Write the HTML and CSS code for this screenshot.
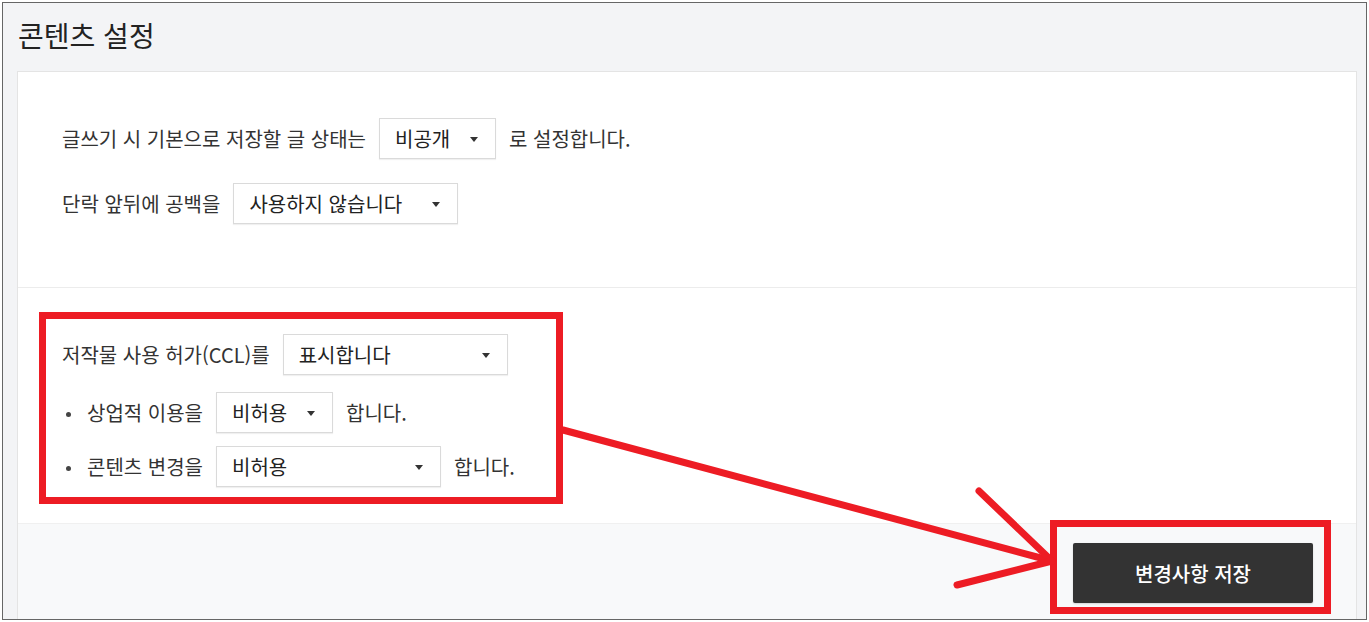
FILE: index.html
```html
<!DOCTYPE html>
<html lang="ko">
<head>
  <meta charset="UTF-8" />
  <meta name="viewport" content="width=device-width, initial-scale=1.0"/>
  <title>콘텐츠 설정</title>
  <link rel="stylesheet" href="styles.css">
</head>
<body>
  <div class="frame">
    <h2 class="page-title">콘텐츠 설정</h2>

    <div class="settings-card">
      <div class="settings-section">
        <div class="setting-row">
          <span>글쓰기 시 기본으로 저장할 글 상태는</span>
          <div class="select-box w-small">비공개<span class="caret"></span></div>
          <span>로 설정합니다.</span>
        </div>
        <div class="setting-row">
          <span>단락 앞뒤에 공백을</span>
          <div class="select-box w-large">사용하지 않습니다<span class="caret"></span></div>
        </div>
      </div>

      <div class="settings-section ccl">
        <div class="setting-row">
          <span>저작물 사용 허가(CCL)를</span>
          <div class="select-box w-large">표시합니다<span class="caret"></span></div>
        </div>
        <div class="setting-row sub">
          <span class="bullet">상업적 이용을</span>
          <div class="select-box w-small">비허용<span class="caret"></span></div>
          <span>합니다.</span>
        </div>
        <div class="setting-row sub">
          <span class="bullet">콘텐츠 변경을</span>
          <div class="select-box w-large">비허용<span class="caret"></span></div>
          <span>합니다.</span>
        </div>
      </div>

      <div class="settings-footer">
        <button class="save-btn">변경사항 저장</button>
      </div>
    </div>

    <!-- annotation marks drawn over the page -->
    <svg class="markup" width="1369" height="622" viewBox="0 0 1369 622">
      <rect x="42.5" y="315.5" width="517" height="185" fill="none" stroke="#ed1c24" stroke-width="7"/>
      <rect x="1053.5" y="523.5" width="274" height="87" fill="none" stroke="#ed1c24" stroke-width="7"/>
      <g stroke="#ed1c24" stroke-width="7" stroke-linecap="round" fill="none">
        <line x1="563" y1="430" x2="1052" y2="561"/>
        <line x1="979" y1="491" x2="1052" y2="561"/>
        <line x1="957" y1="585" x2="1052" y2="561"/>
      </g>
    </svg>
  </div>
</body>
</html>
```

FILE: styles.css
```css
body {
  margin: 0;
  font-family: "Noto Sans CJK KR", "Noto Sans", sans-serif;
  color: #333;
  background: #fff;
}

.frame {
  position: relative;
  margin: 2px 2px 0 2px;
  height: 616px;
  border: 1px solid #666;
  background: #f3f4f6;
  overflow: hidden;
  padding: 0 9px 0 14px;
}

.page-title {
  margin: 0;
  padding: 13px 0 0 1px;
  height: 55px;
  font-size: 28px;
  font-weight: 400;
  line-height: 38px;
  color: #222;
}

.settings-card {
  background: #fff;
  border: 1px solid #e4e4e4;
}

.settings-section {
  padding: 46px 44px 63px;
}

.settings-section.ccl {
  border-top: 1px solid #ececec;
  padding: 46px 44px 36px;
}

.setting-row {
  display: flex;
  align-items: center;
  gap: 13px;
  font-size: 20px;
  line-height: 28px;
  margin-bottom: 24px;
}

.setting-row:last-child {
  margin-bottom: 0;
}

.settings-section.ccl .setting-row {
  margin-bottom: 17px;
}

.settings-section.ccl .setting-row.sub {
  margin-bottom: 13px;
}

.settings-section.ccl .setting-row:last-child {
  margin-bottom: 0;
}

.bullet {
  position: relative;
  padding-left: 25px;
}

.bullet::before {
  content: "";
  position: absolute;
  left: 4px;
  top: 13px;
  width: 5px;
  height: 5px;
  border-radius: 50%;
  background: #444;
}

.select-box {
  position: relative;
  box-sizing: border-box;
  height: 41px;
  padding: 0 15px;
  border: 1px solid #dadada;
  box-shadow: 0 1px 1px rgba(0, 0, 0, 0.06);
  background: #fff;
  display: flex;
  align-items: center;
  color: #222;
}

.w-small {
  width: 117px;
}

.w-large {
  width: 225px;
}

.caret {
  position: absolute;
  right: 17px;
  top: 18px;
  width: 0;
  height: 0;
  border-left: 4px solid transparent;
  border-right: 4px solid transparent;
  border-top: 5px solid #333;
}

.settings-footer {
  background: #f8f9fa;
  border-top: 1px solid #f0f0f0;
  padding: 19px 43px 30px;
  display: flex;
  justify-content: flex-end;
}

.save-btn {
  width: 240px;
  height: 60px;
  background: #333;
  color: #fff;
  border: none;
  border-radius: 2px;
  font-family: inherit;
  font-size: 20px;
  font-weight: 500;
  box-shadow: 0 1px 2px rgba(0, 0, 0, 0.15);
  cursor: pointer;
}

.markup {
  position: absolute;
  left: -3px;
  top: -3px;
  pointer-events: none;
}
```
